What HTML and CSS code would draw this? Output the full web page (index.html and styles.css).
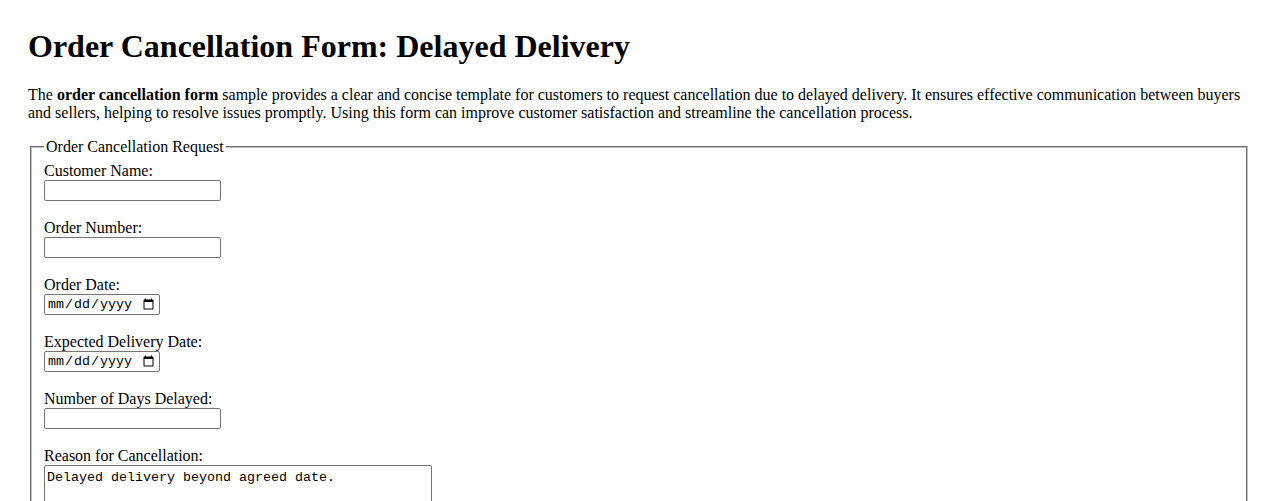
FILE: index.html
```html
<!DOCTYPE html>
<html lang="en">
<head>
    <meta charset="UTF-8">
    <meta name="viewport" content="width=device-width, initial-scale=1.0">
    <title>Order Cancellation Form: Delayed Delivery</title>
    <link rel="stylesheet" href="styles.css">
</head>
<body>
    <h1 class="page-title">Order Cancellation Form: Delayed Delivery</h1>

    <p class="intro">The <strong>order cancellation form</strong> sample provides a clear and concise template for customers to request cancellation due to delayed delivery. It ensures effective communication between buyers and sellers, helping to resolve issues promptly. Using this form can improve customer satisfaction and streamline the cancellation process.</p>

    <form class="cancel-form">
        <fieldset class="cancel-fieldset">
            <legend>Order Cancellation Request</legend>

            <label for="customer-name">Customer Name:</label><br>
            <input class="field-text" type="text" id="customer-name" name="customer-name"><br><br>

            <label for="order-number">Order Number:</label><br>
            <input class="field-text" type="text" id="order-number" name="order-number"><br><br>

            <label for="order-date">Order Date:</label><br>
            <input class="field-date" type="date" id="order-date" name="order-date"><br><br>

            <label for="expected-date">Expected Delivery Date:</label><br>
            <input class="field-date" type="date" id="expected-date" name="expected-date"><br><br>

            <label for="days-delayed">Number of Days Delayed:</label><br>
            <input class="field-text" type="number" id="days-delayed" name="days-delayed"><br><br>

            <label for="reason">Reason for Cancellation:</label><br>
            <textarea class="field-area" id="reason" name="reason" rows="4">Delayed delivery beyond agreed date.</textarea><br><br>

            <label for="comments">Additional Comments:</label><br>
            <textarea class="field-area" id="comments" name="comments" rows="4"></textarea><br><br>

            <input type="submit" value="Submit Cancellation Request">
        </fieldset>
    </form>
</body>
</html>
```

FILE: styles.css
```css
html {
    overflow: hidden;
}

body {
    margin: 0;
    padding: 28px;
    font-family: "Liberation Serif", "Times New Roman", serif;
    font-size: 16px;
    color: #000;
    background: #fff;
}

.page-title {
    font-size: 32px;
    font-weight: bold;
    margin: 0 0 0.67em;
}

.intro {
    margin: 16px 0;
    line-height: 18px;
}

.cancel-fieldset {
    margin: 0 2px;
    padding: 0.35em 0.75em 0.625em;
    border: 2px groove #c0c0c0;
    line-height: 18px;
}

.cancel-fieldset legend {
    padding: 0 2px;
}

.field-text {
    width: 177px;
    height: 21px;
    box-sizing: border-box;
    border: 1px solid #767676;
    border-radius: 2px;
    padding: 1px 2px;
    font-size: 13.333px;
    vertical-align: top;
}

.field-date {
    width: 116px;
    height: 21px;
    box-sizing: border-box;
    border: 1px solid #767676;
    border-radius: 2px;
    padding: 1px 2px;
    font-family: "Liberation Mono", "DejaVu Sans Mono", monospace;
    font-size: 13.333px;
    vertical-align: top;
}

.field-area {
    width: 388px;
    box-sizing: border-box;
    border: 1px solid #767676;
    border-radius: 2px;
    padding: 4px 2px 2px;
    font-family: "Liberation Mono", "DejaVu Sans Mono", monospace;
    font-size: 13.333px;
    vertical-align: top;
}
```
